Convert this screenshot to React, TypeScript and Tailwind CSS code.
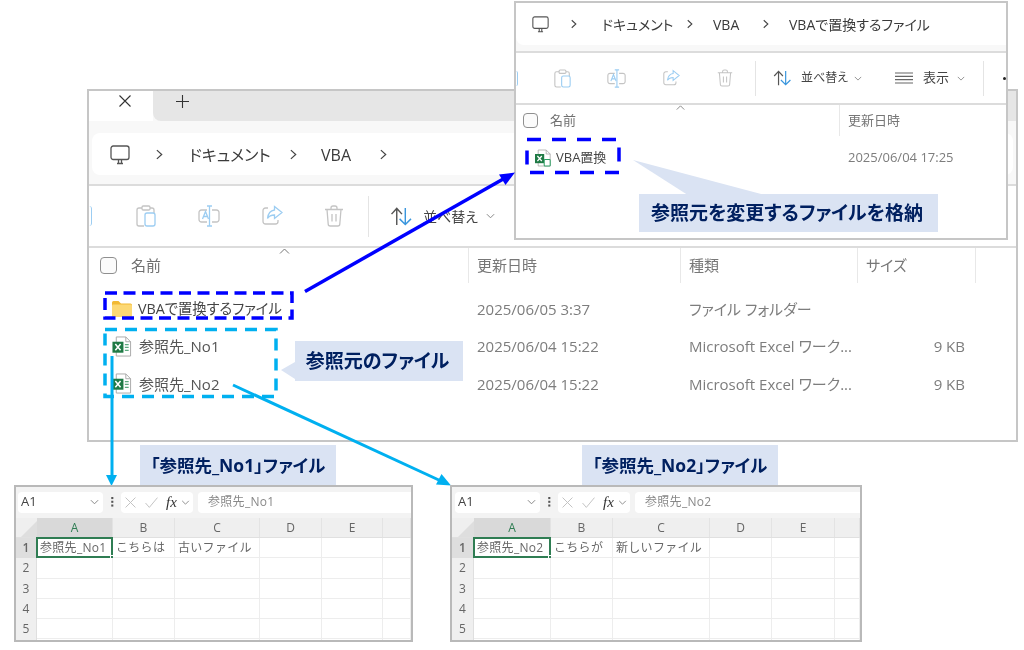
import React from "react";

const Monitor = ({ className }: { className: string }) => (
  <svg viewBox="0 0 20 20" className={className} fill="none" stroke="#555" strokeWidth="1.3">
    <rect x="1" y="1" width="18" height="13.5" rx="2.2" />
    <path d="M7 18.5h6M8.5 15v3.5M11.5 15v3.5" />
  </svg>
);
const Chev = ({ className }: { className: string }) => (
  <svg viewBox="0 0 8 12" className={className} fill="none" stroke="#444" strokeWidth="1.4">
    <path d="M1 1l5.5 5L1 11" />
  </svg>
);
const Clipboard = ({ className }: { className: string }) => (
  <svg viewBox="0 0 20 22" className={className} fill="none" strokeWidth="1.3">
    <path d="M6 3H3a2 2 0 0 0-2 2v14a2 2 0 0 0 2 2h5M14 3h2a2 2 0 0 1 2 2v3" stroke="#c4c4c4" />
    <rect x="6" y="1" width="8" height="4" rx="1.2" stroke="#c4c4c4" />
    <rect x="9" y="8" width="10" height="13" rx="2" stroke="#9ccdf2" />
  </svg>
);
const Rename = ({ className }: { className: string }) => (
  <svg viewBox="0 0 22 22" className={className} fill="none" strokeWidth="1.3">
    <path d="M9 5H3.5A2.5 2.5 0 0 0 1 7.5v7A2.5 2.5 0 0 0 3.5 17H9M14 5h4.5A2.5 2.5 0 0 1 21 7.5v7a2.5 2.5 0 0 1-2.500 2.500H14" stroke="#c4c4c4" />
    <path d="M11.500 1v20M9 1h5M9 21h5" stroke="#9ccdf2" />
    <path d="M4.500 14l3-7.500 3 7.500M5.500 11.500h4" stroke="#9ccdf2" />
  </svg>
);
const Share = ({ className }: { className: string }) => (
  <svg viewBox="0 0 21 20" className={className} fill="none" strokeWidth="1.3">
    <path d="M6 3H3.500A2.500 2.500 0 0 0 1 5.500v11A2.500 2.500 0 0 0 3.500 19h10a2.500 2.500 0 0 0 2.500-2.500V15" stroke="#c4c4c4" />
    <path d="M12.500 1.500L20 7.500l-7.500 6V10c-3.500 0-5.500 1-7 3.500C6 9 8.500 5.500 12.500 5z" stroke="#9ccdf2" />
  </svg>
);
const Trash = ({ className }: { className: string }) => (
  <svg viewBox="0 0 20 22" className={className} fill="none" stroke="#c4c4c4" strokeWidth="1.3">
    <path d="M1 4.500h18M7 4.500V3a2 2 0 0 1 2-2h2a2 2 0 0 1 2 2v1.500M3 4.500l1.200 14.500a2 2 0 0 0 2 2h7.600a2 2 0 0 0 2-2L17 4.500M8 9v7.500M12 9v7.500" />
  </svg>
);
const Sort = ({ className }: { className: string }) => (
  <svg viewBox="0 0 24 20" className={className} fill="none" strokeWidth="1.5">
    <path d="M7 19V2M1.500 7.500L7 1.500l5.500 6" stroke="#555" />
    <path d="M16 1v17M10 12.500l6 6 6-6" stroke="#3a96dd" />
  </svg>
);
const Down = ({ className }: { className: string }) => (
  <svg viewBox="0 0 10 6" className={className} fill="none" stroke="#888" strokeWidth="1.100">
    <path d="M1 1l4 4 4-4" />
  </svg>
);
const Caret = ({ className }: { className: string }) => (
  <svg viewBox="0 0 10 6" className={className} fill="none" stroke="#777" strokeWidth="1">
    <path d="M.5 5.500L5 1l4.500 4.500" />
  </svg>
);
const Folder = ({ className }: { className: string }) => (
  <svg viewBox="0 0 20 16" className={className}>
    <path d="M0 1.500A1.500 1.500 0 0 1 1.500 0h5L9 2.500h9.500A1.500 1.500 0 0 1 20 4v10.500a1.500 1.500 0 0 1-1.500 1.500h-17A1.500 1.500 0 0 1 0 14.500z" fill="#f2b933" />
    <rect x="0" y="3.500" width="20" height="12.500" rx="1.200" fill="#fcd874" />
  </svg>
);
const ExcelFile = ({ className, linked }: { className: string; linked?: boolean }) => (
  <svg viewBox="0 0 20 22" className={className} fill="none">
    <path d="M4 1h10l5 5v15H4z" fill="#fff" stroke="#a8a8a8" strokeWidth="1" />
    <path d="M14 1v5h5" stroke="#a8a8a8" strokeWidth="1" />
    {!linked && <path d="M13 9h4M13 12h4M13 15h4" stroke="#5da97f" strokeWidth="1.400" />}
    <rect x="0" y="6" width="11.500" height="11.500" fill="#1f7a45" />
    <path d="M3 8.500l5.500 6.500M8.500 8.500L3 15" stroke="#fff" strokeWidth="1.600" />
    {linked && <rect x="11.500" y="13" width="7.500" height="8" rx="1" fill="#fff" stroke="#2e9e63" strokeWidth="1.300" />}
  </svg>
);
const Kebab = ({ className }: { className: string }) => (
  <svg viewBox="0 0 3 12" className={className} fill="#555">
    <rect y="0" width="2.500" height="2.500" />
    <rect y="4.500" width="2.500" height="2.500" />
    <rect y="9" width="2.500" height="2.500" />
  </svg>
);

function MainWindow() {
  const grid = "grid grid-cols-[379px_212px_177px_118px_1fr]";
  const rows = [
    { icon: <Folder className="w-[20px] h-[16px] ml-[23px]" />, name: "VBAで置換するファイル", nameCls: "ml-[6px] text-[#444] text-[14.300px]", date: "2025/06/05 3:37", type: "ファイル フォルダー", size: "" },
    { icon: <ExcelFile className="w-[20px] h-[21px] ml-[23px]" />, name: "参照先_No1", nameCls: "ml-[7px] text-[#555]", date: "2025/06/04 15:22", type: "Microsoft Excel ワーク...", size: "9 KB" },
    { icon: <ExcelFile className="w-[20px] h-[21px] ml-[23px]" />, name: "参照先_No2", nameCls: "ml-[7px] text-[#555]", date: "2025/06/04 15:22", type: "Microsoft Excel ワーク...", size: "9 KB" },
  ];
  return (
    <div className="absolute left-[87px] top-[89px] w-[931px] h-[353px] border-2 border-[#c6c6c6] bg-white overflow-hidden flex flex-col [font-feature-settings:'palt']">
      <div className="h-[30px] flex bg-[#f8f8f8] shrink-0">
        <div className="w-[64px] bg-white flex items-start justify-center pt-[4px]">
          <svg viewBox="0 0 12 12" className="w-[12px] h-[12px] ml-[8px]" fill="none" stroke="#333" strokeWidth="1.100"><path d="M.5.500l11 11M11.500.500l-11 11" /></svg>
        </div>
        <div className="flex-1 bg-[#e6e6e6] rounded-bl-lg flex items-start pt-[4px]">
          <svg viewBox="0 0 13 13" className="w-[13px] h-[13px] ml-[23px]" fill="none" stroke="#333" strokeWidth="1.100"><path d="M6.500 0v13M0 6.500h13" /></svg>
        </div>
      </div>
      <div className="h-[65px] bg-[#f8f8f8] border-b-2 border-[#dcdcdc] px-[3px] pt-[12px] shrink-0">
        <div className="h-[42px] bg-white rounded-lg flex items-center pt-[1px] text-[16px] text-[#3a3a3a]">
          <Monitor className="w-[20px] h-[20px] ml-[18px]" />
          <Chev className="w-[7px] h-[11px] ml-[26px]" />
          <span className="ml-[26px] w-[78px] whitespace-nowrap">ドキュメント</span>
          <Chev className="w-[7px] h-[11px] ml-[23px]" />
          <span className="ml-[24px] w-[36px]">VBA</span>
          <Chev className="w-[7px] h-[11px] ml-[23px]" />
        </div>
      </div>
      <div className="h-[62px] border-b-2 border-[#dcdcdc] flex items-center shrink-0">
        <div className="w-[3px] h-[20px] rounded-r-sm border-r-[1.500px] border-[#9ccdf2]" />
        <div className="ml-[44px] flex">
          <div className="w-[62px]"><Clipboard className="w-[20px] h-[22px]" /></div>
          <div className="w-[64px]"><Rename className="w-[22px] h-[22px]" /></div>
          <div className="w-[62px]"><Share className="w-[21px] h-[20px]" /></div>
          <div className="w-[44px]"><Trash className="w-[20px] h-[22px]" /></div>
        </div>
        <div className="w-px h-[41px] bg-[#e4e4e4]" />
        <Sort className="w-[23px] h-[19px] ml-[21px]" />
        <span className="ml-[10px] text-[14px] text-[#444] whitespace-nowrap w-[56px]">並べ替え</span>
        <Down className="w-[9px] h-[6px] ml-[7px]" />
      </div>
      <div className={`${grid} h-[35px] text-[15px] text-[#777] shrink-0 relative`}>
        <div className="flex items-center">
          <span className="w-[17px] h-[17px] ml-[11px] rounded-[4px] border-[1.500px] border-[#8f8f8f] bg-[#fbfbfb]" />
          <span className="ml-[14px] text-[#707070]">名前</span>
        </div>
        {["更新日時", "種類", "サイズ", ""].map((t, i) => (
          <div key={i} className="border-l border-[#e8e8e8] pl-[8px] flex items-center">{t}</div>
        ))}
        <Caret className="absolute left-[190px] top-[0px] w-[11px] h-[6px]" />
      </div>
      <div className="pt-[7px]">
        {rows.map((r) => (
          <div key={r.name} className={`${grid} h-[37.500px] items-center text-[15px]`}>
            <div className="flex items-center">
              {r.icon}
              <span className={`${r.nameCls} whitespace-nowrap`}>{r.name}</span>
            </div>
            <div className="pl-[9px] text-[#7d7d7d]">{r.date}</div>
            <div className="pl-[9px] text-[#7d7d7d] whitespace-nowrap">{r.type}</div>
            <div className="text-right pr-[10px] text-[#7d7d7d]">{r.size}</div>
            <div />
          </div>
        ))}
      </div>
    </div>
  );
}

function TopWindow() {
  return (
    <div className="absolute left-[514px] top-[1px] w-[494px] h-[239px] border-2 border-[#c6c6c6] bg-white overflow-hidden flex flex-col [font-feature-settings:'palt']">
      <div className="h-[50px] bg-[#f8f8f8] border-b-2 border-[#dcdcdc] shrink-0">
        <div className="h-[42px] bg-white rounded-bl-lg flex items-center text-[14px] text-[#3a3a3a]">
          <Monitor className="w-[17px] h-[17px] ml-[16px]" />
          <Chev className="w-[6px] h-[10px] ml-[22px]" />
          <span className="ml-[25px] w-[65px] whitespace-nowrap">ドキュメント</span>
          <Chev className="w-[6px] h-[10px] ml-[20px]" />
          <span className="ml-[20px] w-[30px]">VBA</span>
          <Chev className="w-[6px] h-[10px] ml-[20px]" />
          <span className="ml-[20px] whitespace-nowrap">VBAで置換するファイル</span>
        </div>
      </div>
      <div className="h-[52px] border-b-2 border-[#dcdcdc] flex items-center shrink-0">
        <div className="w-[2px] h-[15px] rounded-r-sm border-r-[1.500px] border-[#9ccdf2]" />
        <div className="ml-[36px] flex">
          <div className="w-[53px]"><Clipboard className="w-[17px] h-[19px]" /></div>
          <div className="w-[56px]"><Rename className="w-[19px] h-[19px]" /></div>
          <div className="w-[54px]"><Share className="w-[17px] h-[17px]" /></div>
          <div className="w-[38px]"><Trash className="w-[16px] h-[18px]" /></div>
        </div>
        <div className="w-px h-[35px] bg-[#e4e4e4]" />
        <Sort className="w-[19px] h-[16px] ml-[17px]" />
        <span className="ml-[9px] text-[12px] text-[#444] whitespace-nowrap w-[47px]">並べ替え</span>
        <Down className="w-[8px] h-[5px] ml-[6px]" />
        <svg viewBox="0 0 18 12" className="w-[18px] h-[12px] ml-[33px]" fill="none" stroke="#666" strokeWidth="1.200"><path d="M0 1h18M0 4.300h18M0 7.600h18M0 11h18" /></svg>
        <span className="ml-[10px] text-[13px] text-[#444] w-[27px] whitespace-nowrap">表示</span>
        <Down className="w-[8px] h-[5px] ml-[7px]" />
        <div className="w-px h-[35px] bg-[#e4e4e4] ml-[18px]" />
        <span className="w-[3px] h-[3px] rounded-full bg-[#222] ml-[19px]" />
      </div>
      <div className="grid grid-cols-[323px_1fr] h-[31px] text-[13px] text-[#777] shrink-0 relative">
        <div className="flex items-center">
          <span className="w-[15px] h-[15px] ml-[7px] rounded-[4px] border-[1.500px] border-[#8f8f8f] bg-[#fbfbfb]" />
          <span className="ml-[12px] text-[#707070]">名前</span>
        </div>
        <div className="border-l border-[#e8e8e8] pl-[8px] flex items-center">更新日時</div>
        <Caret className="absolute left-[160px] top-0 w-[9px] h-[5px]" />
      </div>
      <div className="grid grid-cols-[323px_1fr] h-[44px] items-center text-[13px]">
        <div className="flex items-center">
          <ExcelFile linked className="w-[16px] h-[18px] ml-[19px]" />
          <span className="ml-[5px] text-[#444] whitespace-nowrap">VBA置換</span>
        </div>
        <div className="pl-[9px] text-[#7d7d7d] whitespace-nowrap">2025/06/04 17:25</div>
      </div>
    </div>
  );
}

type ExcelProps = {
  pos: string;
  cols: string;
  formula: string;
  a: string;
  b: string;
  c: string;
  ml: string;
};

function Excel({ pos, cols, formula, a, b, c, ml }: ExcelProps) {
  const heads = ["A", "B", "C", "D", "E", ""];
  return (
    <div className={`absolute ${pos} h-[157px] border-2 border-[#b9b9b9] bg-white overflow-hidden flex flex-col text-[12px] text-[#555]`}>
      <div className="h-[31px] bg-[#f3f3f3] flex items-center shrink-0 pb-[1px]">
        <div className={`${ml} w-[85px] h-[21px] bg-white rounded flex items-center justify-between pl-[3px] pr-[4px] text-[13px] text-[#444]`}>
          <span>A1</span>
          <Down className="w-[9px] h-[6px]" />
        </div>
        <Kebab className="w-[3px] h-[10px] ml-[8px]" />
        <div className="ml-[7px] w-[72px] h-[21px] bg-white rounded flex items-center">
          <svg viewBox="0 0 10 10" className="w-[11px] h-[11px] ml-[4px]" fill="none" stroke="#c2c2c2" strokeWidth="0.900"><path d="M.5.500l9 9M9.500.500l-9 9" /></svg>
          <svg viewBox="0 0 12 10" className="w-[13px] h-[11px] ml-[9px]" fill="none" stroke="#c2c2c2" strokeWidth="0.900"><path d="M.5 5.500l3.500 4 7.500-9" /></svg>
          <span className="ml-[8px] text-[15px] italic text-[#333] [font-family:'Liberation_Serif',serif] leading-none">fx</span>
          <Down className="w-[9px] h-[5px] ml-[4px]" />
        </div>
        <div className="ml-[5px] flex-1 h-[21px] bg-white rounded-l flex items-center pl-[10px] text-[#888] tracking-[0.3px]">{formula}</div>
      </div>
      <div className={`grid ${cols} h-[20px] shrink-0 bg-[#efefef] border-b border-[#e0e0e0]`}>
        <div className="flex items-end justify-end">
          <svg viewBox="0 0 16 16" className="w-[16px] h-[16px]"><path d="M16 0v16H0z" fill="#dedede" /></svg>
        </div>
        {heads.map((h, i) => (
          <div key={i} className={`flex items-center justify-center border-r border-[#e3e3e3] ${i === 0 ? "bg-[#d9d9d9] text-[#2f7d53]" : "text-[#666]"}`}>{h}</div>
        ))}
      </div>
      {[1, 2, 3, 4, 5, 0].map((n) => (
        <div key={n} className={`grid ${cols} h-[20.300px] shrink-0`}>
          <div className={`flex items-center justify-center border-r border-[#dfdfdf] text-[#666] ${n === 1 ? "bg-[#dedede] text-[#2f7d53] font-semibold" : "bg-[#efefef]"}`}>{n > 0 ? n : ""}</div>
          {heads.map((_, i) => (
            <div key={i} className="relative border-r border-b border-[#ededed] flex items-center whitespace-nowrap tracking-[0.3px] text-[#666]">
              {n === 1 && i === 0 && (
                <>
                  <span className="pl-[3px]">{a}</span>
                  <span className="absolute -left-px -top-px right-[-1px] bottom-[-1px] border-2 border-[#2f7d53]" />
                  <span className="absolute right-[-2px] bottom-[-2px] w-[4px] h-[4px] bg-[#2f7d53] border-[0.500px] border-white" />
                </>
              )}
              {n === 1 && i === 1 && <span className="pl-[3px]">{b}</span>}
              {n === 1 && i === 2 && <span className="pl-[3px]">{c}</span>}
            </div>
          ))}
        </div>
      ))}
    </div>
  );
}

const Label = ({ pos, children }: { pos: string; children: React.ReactNode }) => (
  <div className={`absolute ${pos} bg-[#dae3f3] text-[#002060] font-bold flex items-center justify-center whitespace-nowrap [font-feature-settings:'palt']`}>
    {children}
  </div>
);

export default function App() {
  return (
    <div className="relative w-[1024px] h-[650px] bg-white overflow-hidden [font-family:'Open_Sans','Noto_Sans_CJK_JP',sans-serif] blur-[0.45px]">
      <MainWindow />
      <TopWindow />
      <Label pos="left-[295px] top-[341px] w-[168px] h-[40px] text-[19px] pr-[3px]">参照元のファイル</Label>
      <Label pos="left-[639px] top-[194px] w-[299px] h-[38px] text-[19px] pr-[3px]">参照元を変更するファイルを格納</Label>
      <Label pos="left-[140px] top-[445px] w-[196px] h-[41px] text-[17.500px]">「参照先_No1」ファイル</Label>
      <Label pos="left-[582px] top-[445px] w-[196px] h-[41px] text-[17.500px]">「参照先_No2」ファイル</Label>
      <svg viewBox="0 0 1024 650" className="absolute inset-0 w-[1024px] h-[650px]" fill="none">
        <path d="M295 362v17l-14-9z" fill="#dae3f3" />
        <path d="M633 160L687 194.500H763z" fill="#dae3f3" />
        <rect x="105" y="293" width="187" height="25" stroke="#0000ff" strokeWidth="3.500" strokeDasharray="12 6.500" />
        <rect x="105" y="329.500" width="171" height="67" stroke="#00b0f0" strokeWidth="3.500" strokeDasharray="12 8" />
        <rect x="527" y="139.500" width="92" height="33" stroke="#0000ff" strokeWidth="3.500" strokeDasharray="14 11" />
        <path d="M305 291.500L505 178" stroke="#0000ff" strokeWidth="3.500" />
        <path d="M515 172.500L499 174.500 505.500 185z" fill="#0000ff" />
        <path d="M112 356V476" stroke="#00b0f0" strokeWidth="3" />
        <path d="M111.500 486L106 475H117z" fill="#00b0f0" />
        <path d="M233 385L441 481" stroke="#00b0f0" strokeWidth="3" />
        <path d="M451 485.500L436 484.500 441.500 474z" fill="#00b0f0" />
      </svg>
      <Excel pos="left-[14px] top-[485px] w-[399px]" cols="grid-cols-[21px_76px_62px_85px_62px_61px_1fr]" ml="ml-[2px]" formula="参照先_No1" a="参照先_No1" b="こちらは" c="古いファイル" />
      <Excel pos="left-[450px] top-[485px] w-[412px]" cols="grid-cols-[22px_77px_62px_97px_62px_63px_1fr]" ml="ml-[3px]" formula="参照先_No2" a="参照先_No2" b="こちらが" c="新しいファイル" />
    </div>
  );
}
